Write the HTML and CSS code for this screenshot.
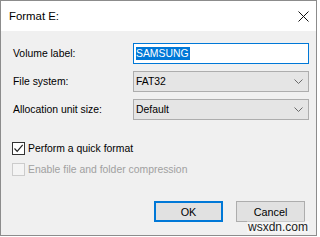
FILE: index.html
```html
<!DOCTYPE html>
<html>
<head>
<meta charset="utf-8">
<link rel="stylesheet" href="styles.css">
</head>
<body>
<div class="window">
  <div class="titlebar">
    <span class="title">Format E:</span>
    <svg class="close" width="11" height="11" viewBox="0 0 11 11"><path d="M0.5 0.5L10.5 10.5M10.5 0.5L0.5 10.5" stroke="#111" stroke-width="1" fill="none"/></svg>
  </div>
  <div class="content">
    <div class="form">
      <label class="label">Volume label:</label>
      <div class="textbox"><span class="sel">SAMSUNG</span></div>
      <label class="label">File system:</label>
      <div class="combo"><span>FAT32</span><svg class="chev" width="9" height="5" viewBox="0 0 9 5"><path d="M0.5 0.5L4.5 4.5L8.5 0.5" stroke="#6a6a6a" stroke-width="1" fill="none"/></svg></div>
      <label class="label">Allocation unit size:</label>
      <div class="combo"><span>Default</span><svg class="chev" width="9" height="5" viewBox="0 0 9 5"><path d="M0.5 0.5L4.5 4.5L8.5 0.5" stroke="#6a6a6a" stroke-width="1" fill="none"/></svg></div>
    </div>
    <div class="checks">
      <div class="check">
        <span class="box checked"><svg width="11" height="11" viewBox="0 0 11 11"><path d="M1.5 5.5L4.2 8.3L9.7 1.8" stroke="#222" stroke-width="1.2" fill="none"/></svg></span>
        <span>Perform a quick format</span>
      </div>
      <div class="check disabled">
        <span class="box"></span>
        <span>Enable file and folder compression</span>
      </div>
    </div>
    <div class="buttons">
      <div class="btn default">OK</div>
      <div class="btn">Cancel</div>
    </div>
    <div class="watermark">wsxdn.com</div>
  </div>
</div>
</body>
</html>
```
FILE: styles.css
```css
html, body {
  margin: 0;
  padding: 0;
  background: #ffffff;
}
body {
  width: 320px;
  height: 237px;
  overflow: hidden;
  font-family: "Liberation Sans", Arial, sans-serif;
  font-size: 10.4px;
  color: #000;
}
.window {
  width: 317px;
  height: 236px;
  box-sizing: border-box;
  border: 1px solid #8c8c8c;
  display: flex;
  flex-direction: column;
  background: #f0f0f0;
}
.titlebar {
  height: 30px;
  background: #fff;
  display: flex;
  align-items: center;
  justify-content: space-between;
  padding: 0 7px 0 8px;
  flex: none;
}
.title {
  font-size: 11.4px;
  position: relative;
  top: 0;
}
.close {
  display: block;
}
.content {
  flex: 1;
  position: relative;
  padding: 12px 7px 0 12px;
  display: flex;
  flex-direction: column;
}
.form {
  display: grid;
  grid-template-columns: 120px 176px;
  grid-auto-rows: 21px;
  row-gap: 7px;
  align-items: center;
}
.label {
  line-height: 21px;
}
.textbox {
  height: 21px;
  box-sizing: border-box;
  border: 1px solid #0078d7;
  background: #fff;
  display: flex;
  align-items: center;
  padding-left: 2px;
}
.sel {
  background: #0078d7;
  color: #fff;
  line-height: 13px;
  padding-right: 1px;
}
.combo {
  height: 21px;
  box-sizing: border-box;
  border: 1px solid #adadad;
  background: #e5e5e5;
  display: flex;
  align-items: center;
  justify-content: space-between;
  padding: 0 5px 0 2px;
}
.chev {
  display: block;
}
.checks {
  margin-top: 22px;
  margin-left: -1px;
  display: flex;
  flex-direction: column;
  gap: 8px;
}
.check {
  display: flex;
  align-items: center;
  gap: 3px;
  height: 13px;
}
.box {
  width: 13px;
  height: 13px;
  box-sizing: border-box;
  border: 1px solid #333;
  background: #fff;
  display: flex;
  align-items: center;
  justify-content: center;
}
.disabled {
  color: #a0a0a0;
}
.disabled .box {
  border-color: #cccccc;
  background: #f4f4f4;
}
.buttons {
  margin-top: 25px;
  display: flex;
  justify-content: flex-end;
  gap: 13px;
  padding-right: 4px;
}
.btn {
  width: 69px;
  height: 21px;
  box-sizing: border-box;
  border: 1px solid #adadad;
  background: #e1e1e1;
  display: flex;
  align-items: center;
  justify-content: center;
  font-size: 10.8px;
}
.btn.default {
  border: 2px solid #0078d7;
}
.watermark {
  position: absolute;
  left: 246px;
  top: 190px;
  font-size: 12px;
  line-height: 12px;
  color: #222;
  background: rgba(255,255,255,0.35);
  padding: 0 1px;
}
```
